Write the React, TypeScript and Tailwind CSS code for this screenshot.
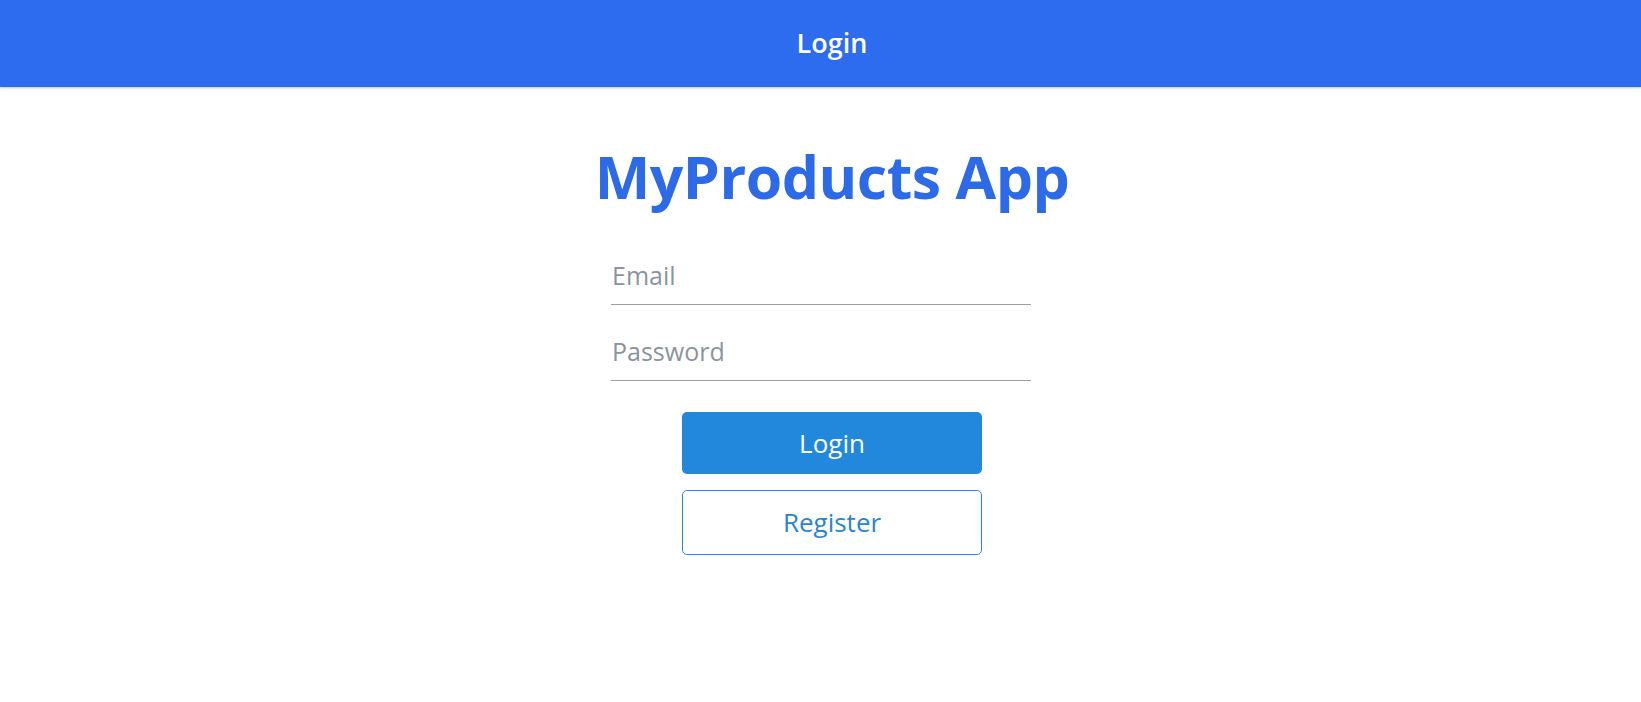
export default function App() {
  return (
    <div className="min-h-screen bg-white font-['Open_Sans',sans-serif]">
      <header className="flex h-[87px] items-center justify-center bg-[#2d6cef] pl-[23px] shadow-[0_1px_2px_rgba(0,0,0,0.25)]">
        <h1 className="text-[27px] font-semibold text-white">Login</h1>
      </header>

      <main className="flex flex-col items-center pl-[23px]">
        <h2 className="mt-[49px] text-[59px] font-bold leading-[80px] tracking-[-0.5px] text-[#2d6ae8]">
          MyProducts App
        </h2>

        <form className="mt-[37px] flex w-[442px] flex-col pr-[22px]" onSubmit={(e) => e.preventDefault()}>
          <input
            type="email"
            placeholder="Email"
            className="h-[52px] w-full border-b border-[#9aa0a6] bg-transparent px-[1px] pb-[8px] text-[25px] text-gray-800 outline-none placeholder:text-[#8b949e]"
          />
          <input
            type="password"
            placeholder="Password"
            className="mt-[24px] h-[52px] w-full border-b border-[#9aa0a6] bg-transparent px-[1px] pb-[8px] text-[25px] text-gray-800 outline-none placeholder:text-[#8b949e]"
          />
        </form>

        <div className="mt-[31px] flex flex-col gap-[16px]">
          <button className="h-[62px] w-[300px] rounded-[5px] bg-[#2188db] text-[26px] text-white">
            Login
          </button>
          <button className="h-[65px] w-[300px] rounded-[5px] border border-[#2d86cf] bg-white text-[26px] text-[#2a85cf]">
            Register
          </button>
        </div>
      </main>
    </div>
  );
}
